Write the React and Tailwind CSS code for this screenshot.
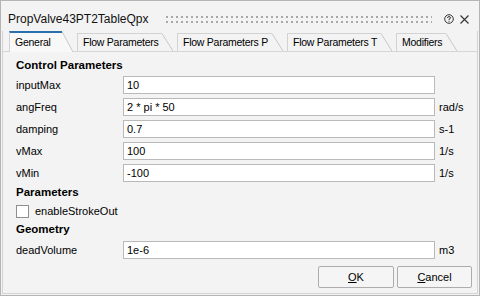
const fields = [
    { name: 'inputMax', value: '10', unit: '' },
    { name: 'angFreq', value: '2 * pi * 50', unit: 'rad/s' },
    { name: 'damping', value: '0.7', unit: 's-1' },
    { name: 'vMax', value: '100', unit: '1/s' },
    { name: 'vMin', value: '-100', unit: '1/s' }
]

const tabs = [
    { label: 'General', w: 'w-[53px]', active: true },
    { label: 'Flow Parameters', w: 'w-[85px]' },
    { label: 'Flow Parameters P', w: 'w-[95px]' },
    { label: 'Flow Parameters T', w: 'w-[94px]' },
    { label: 'Modifiers', w: 'w-[50px]' }
]

const Tab = ({ label, w, active }) => (
    <div className={active ? 'flex h-[21px] -mb-px z-10' : 'flex h-[18px]'}>
        <div
            className={
                active
                    ? `${w} flex items-center pl-[5px] bg-[#f8f8f8] border-l border-l-[#d2d2d2] border-t-2 border-t-[#2b6fae] whitespace-nowrap`
                    : `${w} flex items-center pl-[5px] border-l border-t border-[#d2d2d2] whitespace-nowrap`
            }
        >
            {label}
        </div>
        <svg width="11" height={active ? 21 : 18} className="block">
            <polygon points={active ? '0,0 11,21 0,21' : '0,0 11,18 0,18'} fill={active ? '#f8f8f8' : '#f3f3f3'} />
            <line x1="0" y1="0.5" x2="11" y2={active ? 21 : 18} stroke="#c8c8c8" strokeWidth="1" />
        </svg>
    </div>
)

const Row = ({ name, value, unit }) => (
    <div className="flex items-center h-[22px]">
        <div className="w-[107px]">{name}</div>
        <div className="w-[312px] h-[18px] bg-white border border-[#b9b9b9] flex items-center pl-[3px]">{value}</div>
        <div className="ml-[4px]">{unit}</div>
    </div>
)

const App = () => {
    return (
        <div className="w-[480px] h-[296px] bg-[#f3f3f3] border border-[#b4b4b4] flex flex-col text-[11px] text-black font-['Liberation_Sans',Arial,sans-serif]">
            {/* Title bar */}
            <div className="flex items-center h-[30px] pt-[6px] pl-[7px] pr-[10px] shrink-0">
                <div className="text-[12px] text-[#111]">PropValve43PT2TableQpx</div>
                <svg width="266" height="7" className="ml-[17px] block">
                    <defs>
                        <pattern id="grip" width="5" height="5" patternUnits="userSpaceOnUse">
                            <rect x="0" y="0" width="2" height="2" fill="#a8a8a8" />
                        </pattern>
                    </defs>
                    <rect width="266" height="7" fill="url(#grip)" />
                </svg>
                <div className="flex-1" />
                <svg width="10" height="10" viewBox="0 0 10 10" className="block">
                    <circle cx="5" cy="5" r="4.3" fill="none" stroke="#333" strokeWidth="1" />
                    <path d="M3.5 4 Q3.5 2.6 5 2.6 Q6.5 2.6 6.5 3.9 Q6.5 4.7 5 5.2 L5 6" fill="none" stroke="#333" strokeWidth="1" />
                    <rect x="4.5" y="6.8" width="1" height="1" fill="#333" />
                </svg>
                <svg width="9" height="9" viewBox="0 0 9 9" className="block ml-[6px]">
                    <path d="M0.5 0.5 L8.5 8.5 M8.5 0.5 L0.5 8.5" stroke="#333" strokeWidth="1.1" />
                </svg>
            </div>

            {/* Frame */}
            <div className="flex-1 flex flex-col mx-px mb-px border-l border-r border-b border-[#d4d4d4]">
                <div className="flex items-end gap-[4px] h-[21px] pl-[6px] border-b border-[#d6d6d6] text-[10.5px] tracking-[-0.25px] shrink-0">
                    {tabs.map((t) => (
                        <Tab key={t.label} {...t} />
                    ))}
                </div>

                <div className="flex-1 flex flex-col pl-[13px] pt-[5px]">
                    <div className="h-[17px] flex items-center font-bold text-[11.5px]">Control Parameters</div>
                    {fields.map((f) => (
                        <Row key={f.name} {...f} />
                    ))}
                    <div className="h-[18px] flex items-center font-bold text-[11.5px]">Parameters</div>
                    <div className="h-[18px] flex items-center">
                        <div className="w-[13px] h-[13px] bg-white border border-[#8e8e8e]" />
                        <div className="ml-[6px]">enableStrokeOut</div>
                    </div>
                    <div className="h-[19px] flex items-center font-bold text-[11.5px]">Geometry</div>
                    <Row name="deadVolume" value="1e-6" unit="m3" />

                    <div className="flex-1" />
                    <div className="flex justify-end gap-[3px] pr-[5px] pb-[5px]">
                        <button className="w-[76px] h-[22px] bg-[#f5f5f5] border border-[#adadad] rounded-[2px]">
                            <span className="underline">O</span>K
                        </button>
                        <button className="w-[75px] h-[22px] bg-[#f5f5f5] border border-[#adadad] rounded-[2px]">
                            <span className="underline">C</span>ancel
                        </button>
                    </div>
                </div>
            </div>
        </div>
    )
}

export default App
